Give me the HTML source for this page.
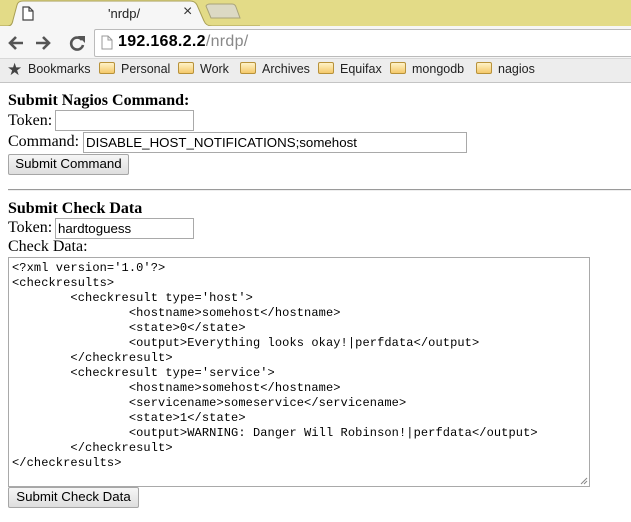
<!DOCTYPE html>
<html><head><meta charset="utf-8"><style>
*{box-sizing:border-box}
body{margin:0;width:631px;height:522px;overflow:hidden;background:#fff;position:relative;font-family:"Liberation Serif",serif;font-size:16px;color:#000}
.a{position:absolute}
.ui{font-family:"Liberation Sans",sans-serif}
.inp{position:absolute;border:1px solid #a9a9a9;background:#fff;font-family:"Liberation Sans",sans-serif;font-size:13.3px;padding:2px 2px;line-height:15px;white-space:nowrap;overflow:hidden}
.btn{position:absolute;border:1px solid #a6a6a6;border-radius:2px;background:linear-gradient(#f6f6f6,#dedede);font-family:"Liberation Sans",sans-serif;font-size:13.3px;text-align:center;line-height:18px;color:#000}
.lbl{position:absolute;line-height:18px}
.fold{display:inline-block;width:16px;height:12px;border:1px solid #b8923a;border-radius:2px;background:linear-gradient(#fff2c8,#f5c96a);vertical-align:-1px;margin-right:6px}
.bm{position:absolute;top:62px;font-size:12.5px;color:#222;font-family:"Liberation Sans",sans-serif}
</style></head><body>
<div class="a" style="left:0;top:0;width:631px;height:26px;background:#e3db87"></div>
<svg class="a" style="left:0;top:0" width="260" height="27"><path d="M0 26 L8 26 Q12 26 13 20 L17 5 Q18 1 23 1 L190 1 Q195 1 197 5 L204 21 Q206 26 212 26 L631 26" fill="#f6f6f6" stroke="#a89f55"/><path d="M206 6 Q207 4 210 4 L232 4 Q235 4 236 7 L240 18 L211 18 Z" fill="#dcd9c4" stroke="#a8a37a"/></svg>
<svg class="a" style="left:22px;top:6px" width="12" height="15"><path d="M1 1 H7 L11 5 V14 H1 Z M7 1 V5 H11" fill="#fff" stroke="#444" stroke-width="1.2"/></svg>
<div class="a ui" style="left:108px;top:6px;font-size:13px;color:#222">'nrdp/</div>
<div class="a ui" style="left:183px;top:3px;font-size:16px;color:#333">×</div>
<div class="a" style="left:0;top:26px;width:631px;height:33px;background:#f6f6f6"></div>
<svg class="a" style="left:8px;top:34px" width="80" height="18"><g stroke="#555" stroke-width="2.6" fill="none"><path d="M2 9 H15 M8 3 L2 9 L8 15"/><path d="M28 9 H41 M35 3 L41 9 L35 15"/><path d="M74 6 A6 6 0 1 0 75 11"/></g><path d="M70 2 L77 2 L77 9 Z" fill="#555"/></svg>
<div class="a" style="left:94px;top:29px;width:545px;height:28px;background:#fff;border:1px solid #bbb;border-radius:2px"></div>
<svg class="a" style="left:101px;top:35px" width="12" height="15"><path d="M1 1 H7 L11 5 V14 H1 Z M7 1 V5 H11" fill="#fff" stroke="#999"/></svg>
<div class="a ui" style="left:118px;top:33px;font-size:16px;letter-spacing:0.3px"><b style="color:#000">192.168.2.2</b><span style="color:#888">/nrdp/</span></div>
<div class="a" style="left:0;top:58px;width:631px;height:25px;background:#ededed;border-top:1px solid #d8d8d8;border-bottom:1px solid #c4c4c4"></div>
<div class="bm" style="left:7px;top:60px"><span style="color:#444;font-size:17px">★</span></div>
<div class="bm" style="left:28px">Bookmarks</div>
<div class="bm" style="left:99px"><span class="fold"></span>Personal</div>
<div class="bm" style="left:178px"><span class="fold"></span>Work</div>
<div class="bm" style="left:240px"><span class="fold"></span>Archives</div>
<div class="bm" style="left:318px"><span class="fold"></span>Equifax</div>
<div class="bm" style="left:390px"><span class="fold"></span>mongodb</div>
<div class="bm" style="left:476px"><span class="fold"></span>nagios</div>
<div class="lbl" style="left:8px;top:92px;font-weight:bold">Submit Nagios Command:</div>
<div class="lbl" style="left:8px;top:112px">Token:</div>
<div class="inp" style="left:55px;top:110px;width:139px;height:21px"></div>
<div class="lbl" style="left:8px;top:133px">Command:</div>
<div class="inp" style="left:83px;top:132px;width:384px;height:21px">DISABLE_HOST_NOTIFICATIONS;somehost</div>
<div class="btn" style="left:8px;top:154px;width:121px;height:21px">Submit Command</div>
<div class="a" style="left:8px;top:189px;width:623px;height:2px;border-top:1px solid #9a9a9a;border-bottom:1px solid #eee"></div>
<div class="lbl" style="left:8px;top:200px;font-weight:bold">Submit Check Data</div>
<div class="lbl" style="left:8px;top:219px">Token:</div>
<div class="inp" style="left:55px;top:218px;width:139px;height:21px">hardtoguess</div>
<div class="lbl" style="left:8px;top:238px">Check Data:</div>
<div class="a" style="left:8px;top:257px;width:582px;height:230px;border:1px solid #a9a9a9"></div>
<pre class="a" style="margin:0;left:12px;top:261px;font-family:'Liberation Mono',monospace;font-size:12px;letter-spacing:0.1px;line-height:15px;tab-size:8;color:#000">&lt;?xml version='1.0'?&gt;
&lt;checkresults&gt;
	&lt;checkresult type='host'&gt;
		&lt;hostname&gt;somehost&lt;/hostname&gt;
		&lt;state&gt;0&lt;/state&gt;
		&lt;output&gt;Everything looks okay!|perfdata&lt;/output&gt;
	&lt;/checkresult&gt;
	&lt;checkresult type='service'&gt;
		&lt;hostname&gt;somehost&lt;/hostname&gt;
		&lt;servicename&gt;someservice&lt;/servicename&gt;
		&lt;state&gt;1&lt;/state&gt;
		&lt;output&gt;WARNING: Danger Will Robinson!|perfdata&lt;/output&gt;
	&lt;/checkresult&gt;
&lt;/checkresults&gt;</pre>
<svg class="a" style="left:579px;top:476px" width="9" height="9"><path d="M8 2 L2 8 M8 5 L5 8" stroke="#888"/></svg>
<div class="btn" style="left:8px;top:487px;width:131px;height:21px">Submit Check Data</div>
</body></html>
